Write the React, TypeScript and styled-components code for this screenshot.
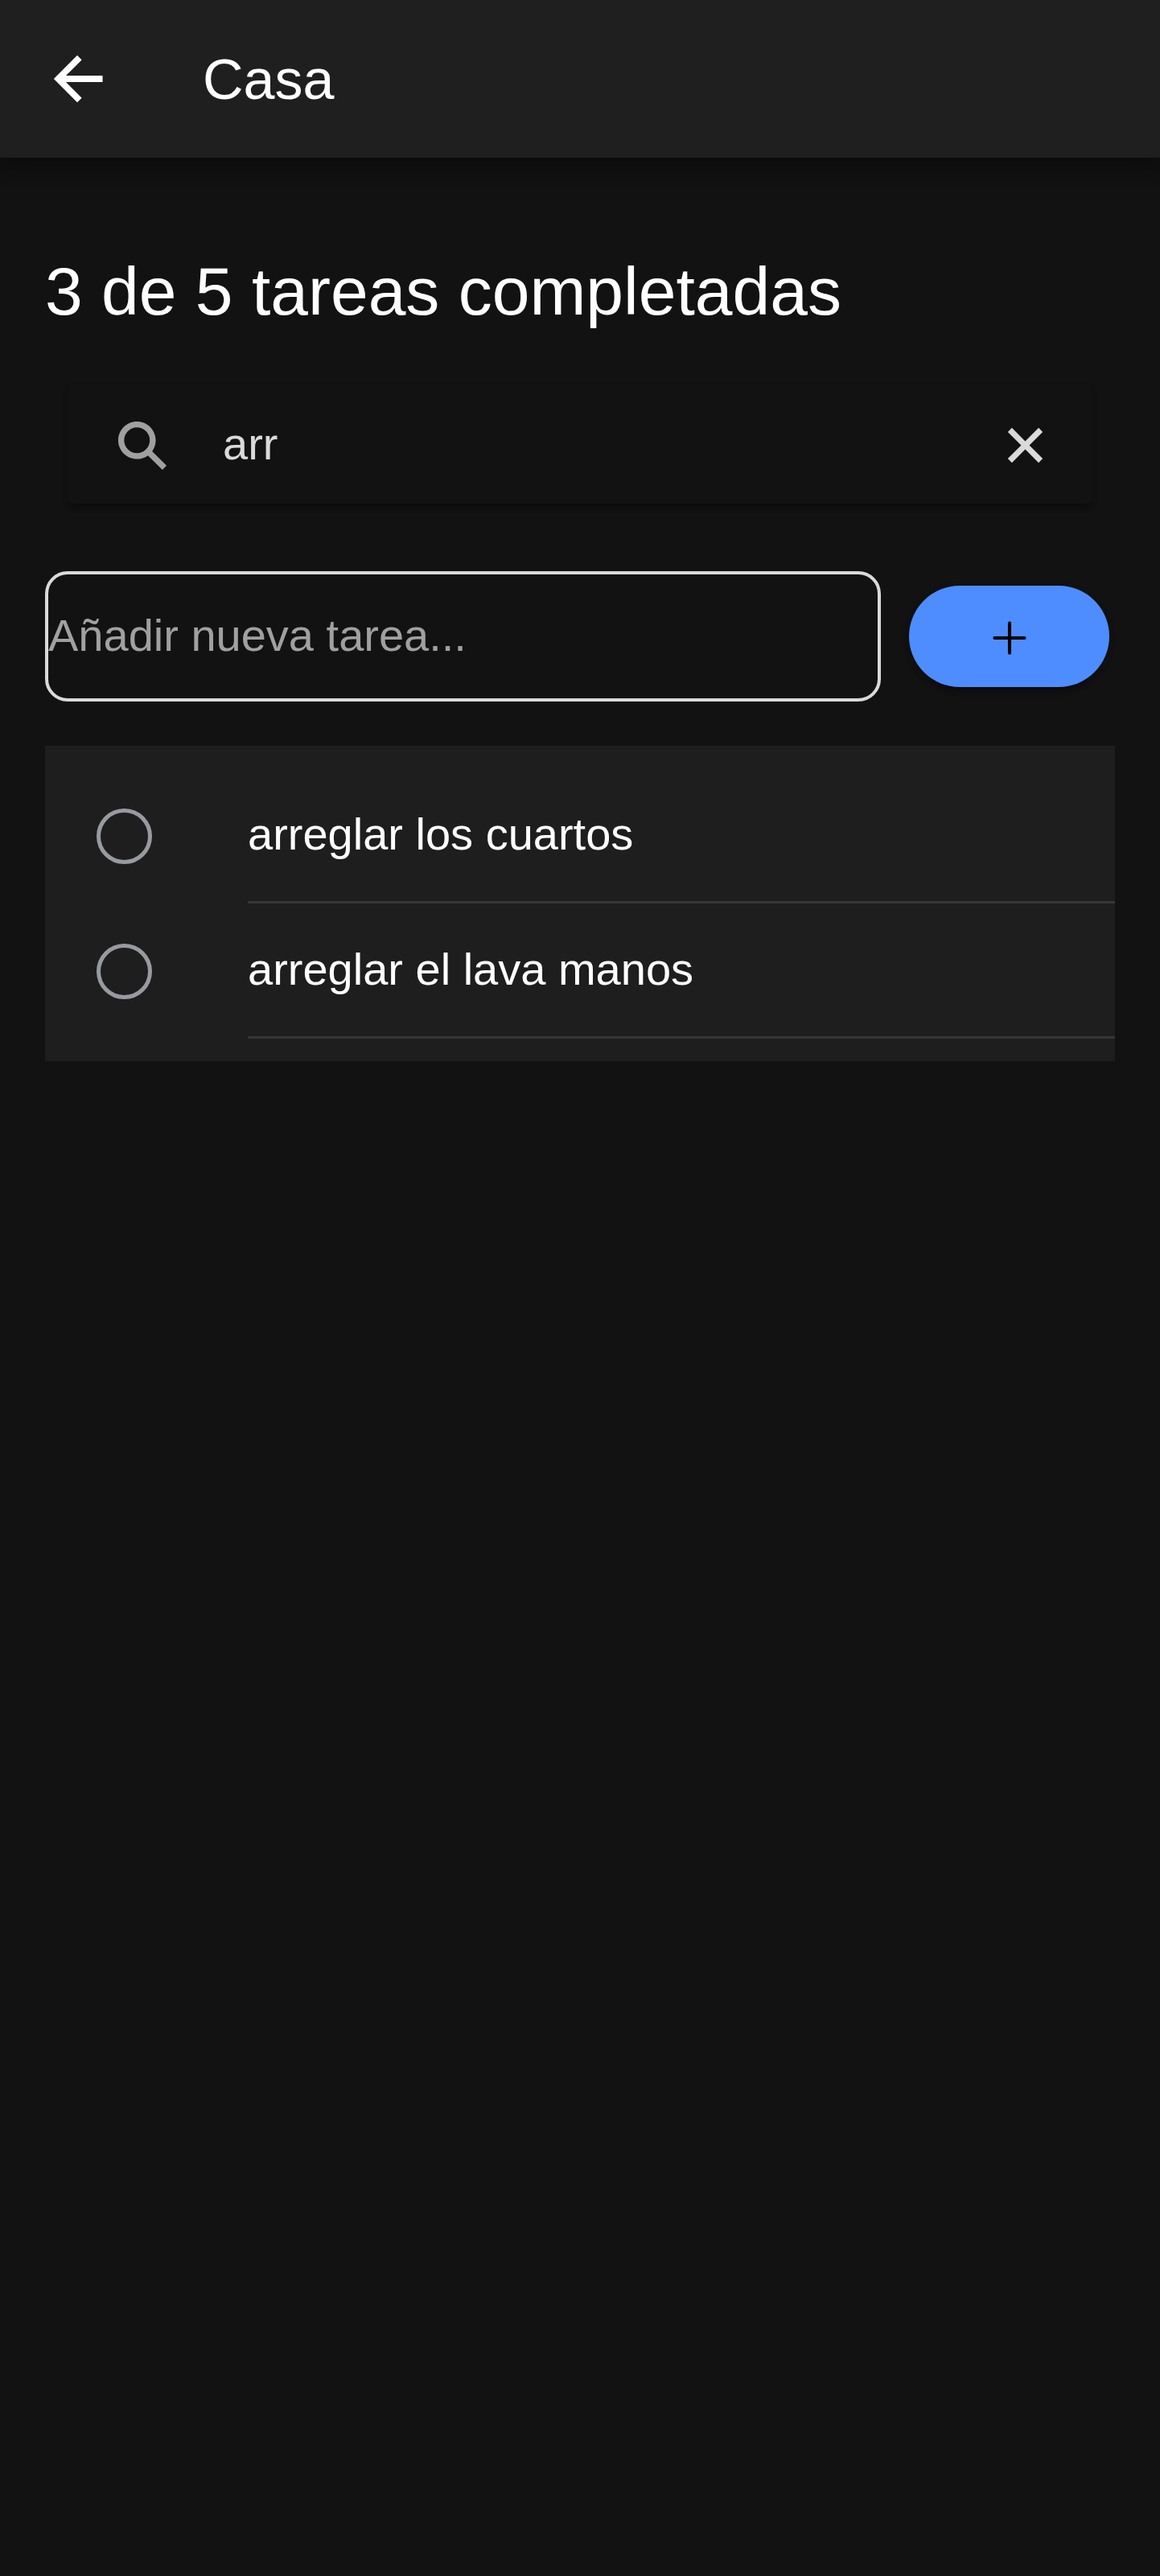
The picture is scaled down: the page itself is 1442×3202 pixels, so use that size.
import React, { useState } from "react";
import styled, { createGlobalStyle } from "styled-components";

const GlobalStyle = createGlobalStyle`
  *, *::before, *::after { box-sizing: border-box; }
  body {
    margin: 0;
    min-height: 100vh;
    background: #121212;
    color: #ffffff;
    font-family: "Liberation Sans", Arial, sans-serif;
    font-size: 56px;
  }
  button, input { font: inherit; color: inherit; }
`;

const raised =
  "0 10px 4px -7px rgba(0, 0, 0, 0.2), 0 5px 7px rgba(0, 0, 0, 0.14), 0 3px 10px rgba(0, 0, 0, 0.1)";

const Toolbar = styled.header`
  display: flex;
  align-items: center;
  gap: 112px;
  height: 196px;
  padding: 0 56px;
  background: #1f1f1f;
  box-shadow:
    0 7px 14px -4px rgba(0, 0, 0, 0.2),
    0 14px 18px rgba(0, 0, 0, 0.14),
    0 4px 35px rgba(0, 0, 0, 0.12);
`;

const IconButton = styled.button`
  display: flex;
  flex: none;
  padding: 0;
  border: 0;
  background: none;
  cursor: pointer;
`;

const Icon = styled.svg<{ $size: number }>`
  display: block;
  flex: none;
  width: ${(p) => p.$size}px;
  height: ${(p) => p.$size}px;
`;

const Title = styled.h1`
  margin: 0;
  padding-top: 2px;
  font-size: 70px;
  font-weight: 400;
  line-height: 84px;
`;

const Content = styled.main`
  padding: 116px 56px 56px;
`;

const Summary = styled.h2`
  margin: 0;
  font-size: 84px;
  font-weight: 400;
  line-height: 100px;
`;

const SearchBar = styled.label`
  display: flex;
  align-items: center;
  gap: 63px;
  height: 149px;
  margin: 65px 28px 84px;
  padding: 0 45px 0 56px;
  border-radius: 7px;
  background: #121212;
  color: #dadada;
  box-shadow: ${raised};

  svg { margin-top: 4px; }
`;

const SearchIcon = styled(Icon)`
  color: #a0a0a0;
`;

const SearchInput = styled.input`
  flex: 1;
  min-width: 0;
  height: 84px;
  padding: 0;
  border: 0;
  outline: 0;
  background: none;
`;

const AddRow = styled.form`
  display: flex;
  align-items: center;
  gap: 35px;
  padding-right: 7px;
`;

const TaskInput = styled.input`
  flex: 1;
  min-width: 0;
  height: 162px;
  padding: 0 0 4px;
  border: 4px solid #dadada;
  border-radius: 28px;
  outline: 0;
  background: none;
  &::placeholder { color: #a0a0a0; opacity: 1; }
`;

const AddButton = styled.button`
  display: flex;
  align-items: center;
  justify-content: center;
  width: 249px;
  height: 126px;
  padding: 4px 0 0;
  border: 0;
  border-radius: 63px;
  background: #4d8dff;
  color: #000000;
  box-shadow: ${raised};
  cursor: pointer;
`;

const TaskList = styled.ul`
  margin: 55px 0 0;
  padding: 28px 0;
  list-style: none;
  background: #1e1e1e;
`;

const TaskRow = styled.li`
  display: flex;
  align-items: center;
  height: 168px;
  padding-left: 64px;
  gap: 119px;
`;

const TaskCheck = styled.input`
  appearance: none;
  flex: none;
  width: 69px;
  height: 69px;
  margin: 0;
  border: 5px solid #989aa2;
  border-radius: 50%;
  &:checked { background: #4d8dff; border-color: #4d8dff; }
`;

const TaskLabel = styled.label`
  flex: 1;
  height: 168px;
  border-bottom: 3px solid #363636;
  line-height: 164px;
`;

const tasks = [
  { id: "cuartos", name: "arreglar los cuartos" },
  { id: "lavamanos", name: "arreglar el lava manos" },
];

export default function App() {
  const [query, setQuery] = useState("arr");
  const [draft, setDraft] = useState("");

  return (
    <>
      <GlobalStyle />
      <Toolbar>
        <IconButton type="button" aria-label="Volver">
          <Icon $size={84} viewBox="0 0 512 512" fill="none" stroke="currentColor" strokeWidth={48} strokeLinecap="square" strokeMiterlimit={10}>
            <path d="M244 400L100 256l144-144M120 256h292" />
          </Icon>
        </IconButton>
        <Title>Casa</Title>
      </Toolbar>
      <Content>
        <Summary>3 de 5 tareas completadas</Summary>
        <SearchBar>
          <SearchIcon $size={74} viewBox="0 0 512 512" fill="currentColor" aria-hidden="true">
            <path d="M464 428L339.92 303.9a160.48 160.48 0 0030.72-94.58C370.64 120.37 298.27 48 209.32 48S48 120.37 48 209.32s72.37 161.32 161.32 161.32a160.48 160.48 0 0094.58-30.72L428 464zM209.32 319.69a110.38 110.38 0 11110.37-110.37 110.5 110.5 0 01-110.37 110.37z" />
          </SearchIcon>
          <SearchInput
            type="text"
            aria-label="Buscar"
            value={query}
            onChange={(e) => setQuery(e.target.value)}
          />
          <IconButton type="button" aria-label="Borrar" onClick={() => setQuery("")}>
            <Icon $size={77} viewBox="0 0 512 512" fill="currentColor">
              <path d="M400 145.49L366.51 112 256 222.51 145.49 112 112 145.49 222.51 256 112 366.51 145.49 400 256 289.49 366.51 400 400 366.51 289.49 256 400 145.49z" />
            </Icon>
          </IconButton>
        </SearchBar>
        <AddRow onSubmit={(e) => e.preventDefault()}>
          <TaskInput
            type="text"
            aria-label="Nueva tarea"
            placeholder="Añadir nueva tarea..."
            value={draft}
            onChange={(e) => setDraft(e.target.value)}
          />
          <AddButton type="submit" aria-label="Añadir">
            <Icon $size={66} viewBox="0 0 512 512" fill="none" stroke="currentColor" strokeWidth={32} strokeLinecap="round">
              <path d="M256 112v288M400 256H112" />
            </Icon>
          </AddButton>
        </AddRow>
        <TaskList>
          {tasks
            .filter((task) => task.name.includes(query.toLowerCase()))
            .map((task) => (
              <TaskRow key={task.id}>
                <TaskCheck type="checkbox" id={task.id} />
                <TaskLabel htmlFor={task.id}>{task.name}</TaskLabel>
              </TaskRow>
            ))}
        </TaskList>
      </Content>
    </>
  );
}
